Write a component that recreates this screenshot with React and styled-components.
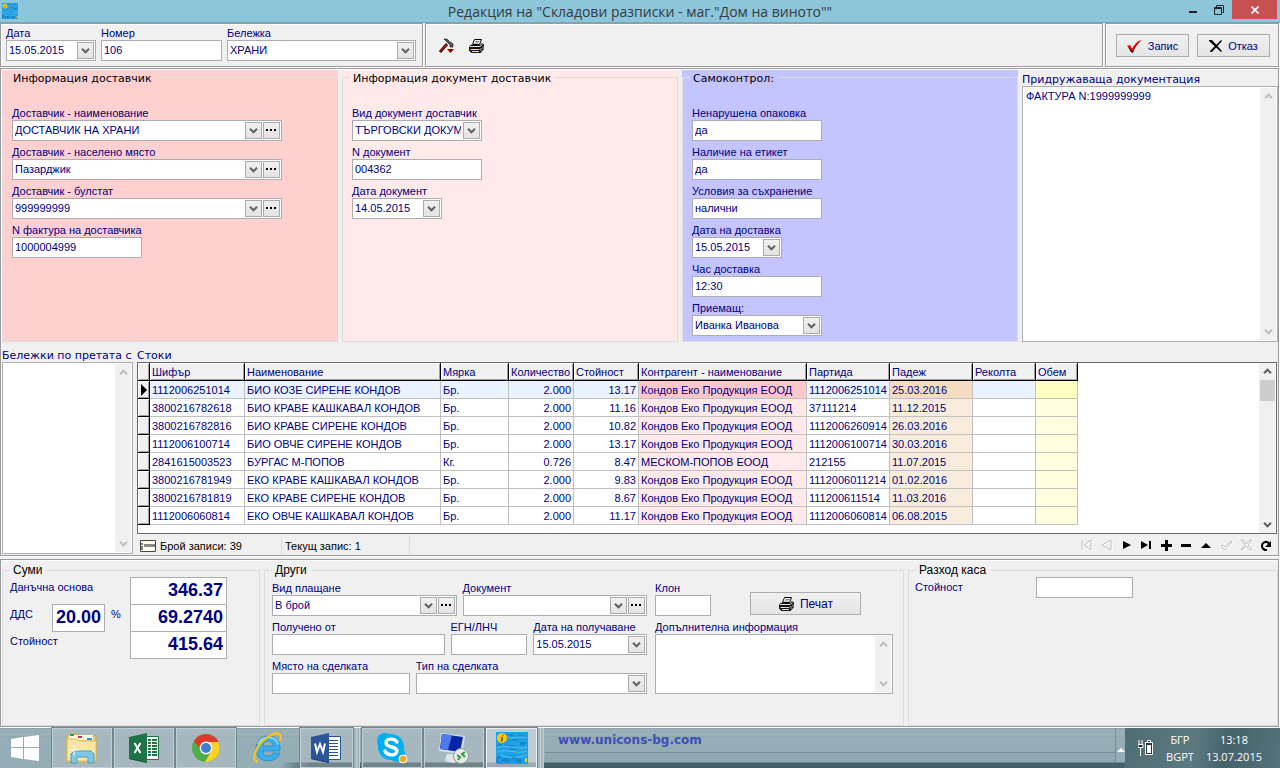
import React, { useId } from "react";
import styled, { createGlobalStyle, css } from "styled-components";

const GlobalStyle = createGlobalStyle`
  *, *::before, *::after { box-sizing: border-box; }
  body { margin: 0; background: #f0f0f0; color: #000080; }
  body, button, input, select, textarea {
    font-family: "Liberation Sans", Arial, sans-serif;
    font-size: 11px;
    line-height: 14px;
  }
`;

const Window = styled.div`
  display: flex;
  flex-direction: column;
  min-height: 100vh;
`;

/* ---------- title bar ---------- */

const TitleBar = styled.header`
  display: grid;
  grid-template-columns: 1fr auto 1fr;
  height: 23px;
  background: #8dc6da;
  border-bottom: 1px solid #7aa5b4;
`;
const TitleIcon = styled.div`
  padding: 3px 2px;
  svg { display: block; }
`;
const Title = styled.h1`
  margin: 0;
  font: 400 14px/24px "Open Sans", "Noto Sans", sans-serif;
  color: #333b3f;
  white-space: nowrap;
`;
const Caption = styled.div`
  display: flex;
  justify-content: flex-end;
`;
const CaptionButton = styled.button`
  display: grid;
  place-items: center;
  width: ${(p) => (p.$close ? 45 : 26)}px;
  height: 19px;
  margin-right: ${(p) => (p.$close ? 3 : 0)}px;
  padding: 0;
  border: 0;
  background: ${(p) => (p.$close ? "#c75050" : "transparent")};
`;

/* ---------- frames ---------- */

const Frame = styled.section`
  border: 1px solid #9a9a9e;
  box-shadow: inset 1px 1px #fff, 1px 1px #fff;
  background: #f0f0f0;
`;
const ToolRow = styled.div`
  display: flex;
  gap: 2px;
  height: 44px;
  margin: 0 1px 1px 0;
`;
const HeaderFields = styled(Frame)`
  display: flex;
  flex: none;
  gap: 5px;
  width: 423px;
  padding: 2px 6px 0 5px;
`;
const Tools = styled(Frame)`
  display: flex;
  flex: 1;
  align-items: center;
  gap: 11px;
  padding: 2px 0 0 13px;
`;
const ToolButton = styled.button`
  width: 18px;
  height: 18px;
  padding: 0;
  border: 0;
  background: none;
  svg { display: block; }
`;
const Actions = styled(Frame)`
  display: flex;
  flex: none;
  gap: 8px;
  padding: 10px 8px 0 10px;
`;
const ActionButton = styled.button`
  display: flex;
  align-items: center;
  justify-content: center;
  gap: 5px;
  width: ${(p) => p.$width}px;
  height: 23px;
  padding: 0;
  border: 1px solid #acacac;
  background: linear-gradient(#f0f0f0, #e5e5e5);
  color: #000080;
  font-size: ${(p) => (p.$large ? 12 : 11)}px;
`;

/* ---------- fields ---------- */

const FieldBox = styled.div`
  display: flex;
  flex-direction: column;
  min-width: 0;
  max-width: 100%;
  ${(p) => (p.$grow ? css`flex: ${p.$grow} 1 0;` : css`width: ${p.$width}px;`)}
`;
const FieldLabel = styled.label`
  height: 14px;
  white-space: nowrap;
`;
const Box = styled.div`
  display: flex;
  gap: 1px;
  height: 21px;
  padding: 1px;
  border: 1px solid #abadb3;
  background: #fff;
`;
const plainControl = css`
  flex: 1;
  min-width: 0;
  width: 100%;
  padding: 0 1px 2px;
  border: 0;
  outline: 0;
  border-radius: 0;
  background: transparent;
  color: #000080;
`;
const TextInput = styled.input`${plainControl}`;
const Select = styled.select`
  ${plainControl}
  appearance: none;
`;
const mini = css`
  display: grid;
  place-items: center;
  flex: none;
  width: 17px;
  height: 17px;
  padding: 0;
  border: 1px solid #acacac;
  background: linear-gradient(#f0f0f0, #e3e3e3);
`;
const MiniButton = styled.button`${mini}`;
const MiniGlyph = styled.span`
  ${mini}
  pointer-events: none;
`;

const Chevron = ({ up, color = "#606060" }) => (
  <svg width="9" height="7" viewBox="0 0 9 7" aria-hidden="true">
    <path d={up ? "M1 5.2 4.5 1.7 8 5.2" : "M1 1.8 4.5 5.3 8 1.8"} fill="none" stroke={color} strokeWidth="2" />
  </svg>
);
const Dots = () => (
  <svg width="11" height="3" viewBox="0 0 11 3" shapeRendering="crispEdges" aria-hidden="true">
    <path d="M0 0h2v2H0zM4 0h2v2H4zM8 0h2v2H8z" fill="#000" />
  </svg>
);

function Field({ label, value = "", kind = "text", more, width, grow }) {
  const id = useId();
  return (
    <FieldBox $width={width} $grow={grow}>
      <FieldLabel htmlFor={id}>{label}</FieldLabel>
      <Box>
        {kind === "select" ? (
          <Select id={id} defaultValue={value}>
            <option value={value}>{value}</option>
          </Select>
        ) : (
          <TextInput id={id} defaultValue={value} />
        )}
        {kind === "select" && <MiniGlyph><Chevron /></MiniGlyph>}
        {kind === "date" && <MiniButton type="button" aria-label={label}><Chevron /></MiniButton>}
        {more && <MiniButton type="button" aria-label={label}><Dots /></MiniButton>}
      </Box>
    </FieldBox>
  );
}

const wideCaption = css`
  font-family: "DejaVu Sans", Verdana, sans-serif;
  font-size: 11px;
`;
const MemoField = styled.div`
  display: flex;
  flex-direction: column;
  min-width: 0;
`;
const MemoLabel = styled.label`
  flex: none;
  height: 14px;
  white-space: nowrap;
  ${(p) => p.$wide && css`
    ${wideCaption}
    line-height: 16px;
  `}
`;
const MemoBox = styled.div`
  display: flex;
  flex: 1;
  padding: 1px;
  min-height: ${(p) => p.$min || 0}px;
  border: 1px solid #abadb3;
  background: #fff;
`;
const MemoText = styled.textarea`
  flex: 1;
  min-width: 0;
  padding: 1px 2px;
  border: 0;
  outline: 0;
  resize: none;
  overflow: hidden;
  background: transparent;
  color: #000080;
`;
const Scroll = styled.div`
  display: flex;
  flex-direction: column;
  align-items: center;
  flex: none;
  width: 16px;
  padding: 5px 0;
  background: #f0f0f0;
`;
const Thumb = styled.div`
  width: 15px;
  height: 21px;
  margin: 5px 0 auto;
  background: #cdcdcd;
`;
const Spacer = styled.div`flex: 1;`;

function Memo({ label, value = "", wide, min }) {
  const id = useId();
  return (
    <MemoField>
      <MemoLabel htmlFor={id} $wide={wide}>{label}</MemoLabel>
      <MemoBox $min={min}>
        <MemoText id={id} defaultValue={value} />
        <Scroll aria-hidden="true">
          <Chevron up color="#bfbfbf" />
          <Spacer />
          <Chevron color="#bfbfbf" />
        </Scroll>
      </MemoBox>
    </MemoField>
  );
}

/* ---------- supplier info ---------- */

const Main = styled(Frame)`
  display: flex;
  flex-direction: column;
  flex: 1;
  gap: 6px;
  margin: 0 1px 3px 0;
  padding: 1px 0 0 1px;
`;
const InfoGrid = styled.div`
  display: grid;
  grid-template-columns: repeat(3, minmax(0, 336fr)) minmax(0, 256fr);
  gap: 4px;
`;
const InfoCard = styled.div`
  display: flex;
  background: ${(p) => p.$color};
`;
const Group = styled.fieldset`
  flex: 1;
  min-width: 0;
  margin: 0;
  padding: 0;
  border: 1px solid #dcdcdc;
`;
const Legend = styled.legend`
  height: 14px;
  margin-left: 7px;
  padding: 0 4px 0 3px;
  color: #000;
  font-size: 12px;
  line-height: 14px;
  ${(p) => p.$wide && css`
    ${wideCaption}
    line-height: 18px;
  `}
`;
const InfoFields = styled.div`
  display: flex;
  flex-direction: column;
  gap: 4px;
  padding: 22px 9px 5px;
`;
const DocsColumn = styled.div`
  display: flex;
  flex-direction: column;
  padding-top: 2px;
  > * { flex: 1; }
`;

/* ---------- goods ---------- */

const GoodsRow = styled.div`
  display: grid;
  grid-template-columns: 131px minmax(0, 1fr);
  gap: 4px;
  flex: 1;
`;
const NotesColumn = styled.div`
  display: flex;
  flex-direction: column;
  padding-bottom: 1px;
  > * { flex: 1; }
`;
const GoodsColumn = styled.div`
  display: flex;
  flex-direction: column;
  min-width: 0;
`;
const GoodsTitle = styled.h2`
  height: 14px;
  margin: 0;
  font-weight: 400;
  line-height: 16px;
  ${wideCaption}
`;
const TableFrame = styled.div`
  display: flex;
  justify-content: space-between;
  flex: 1;
  min-height: 172px;
  padding-right: 1px;
  border: 1px solid #696969;
  margin-right: 1px;
  background: #fff;
`;
const TableScroll = styled.div`
  min-width: 0;
  overflow: hidden;
`;
const Table = styled.table`
  table-layout: fixed;
  width: 940px;
  border-collapse: separate;
  border-spacing: 0;
`;
const Th = styled.th`
  height: 18px;
  padding: 0 2px;
  border-right: 1px solid #000;
  border-bottom: 1px solid #000;
  box-shadow: inset 1px 1px #fff, inset -1px -1px #a0a0a0;
  background: #f0f0f0;
  font-weight: 400;
  text-align: left;
  white-space: nowrap;
  line-height: 14px;
`;
const Td = styled.td`
  height: 18px;
  padding: 0 2px;
  overflow: hidden;
  border-right: 1px solid #c0c0c0;
  border-bottom: 1px solid #c0c0c0;
  background: ${(p) => p.$bg || "#fff"};
  text-align: ${(p) => (p.$num ? "right" : "left")};
  white-space: nowrap;
  line-height: 14px;
`;
const RowHead = styled(Th)`
  padding: 0 0 0 1px;
  svg { display: block; margin: 0 auto; }
`;
const StatusBar = styled.div`
  display: flex;
  align-items: center;
  flex: none;
  height: 21px;
  padding: 2px 2px 0 0;
  color: #000;
`;
const StatusCell = styled.div`
  display: flex;
  align-items: center;
  gap: 4px;
  width: ${(p) => p.$width}px;
  height: 17px;
  padding-left: 3px;
  border-right: 1px solid #d9d9d9;
`;
const Nav = styled.div`
  display: flex;
  margin-left: auto;
`;
const NavButton = styled.button`
  display: grid;
  place-items: center;
  width: 20px;
  height: 18px;
  padding: 0;
  border: 0;
  background: none;
`;

const columns = [
  ["Шифър", 95], ["Наименование", 196], ["Мярка", 68], ["Количество", 65], ["Стойност", 65],
  ["Контрагент - наименование", 168], ["Партида", 83], ["Падеж", 83], ["Реколта", 63], ["Обем", 42],
];
const KONDOV = "Кондов Еко Продукция ЕООД";
const goods = [
  ["1112006251014", "БИО КОЗЕ СИРЕНЕ КОНДОВ", "Бр.", "2.000", "13.17", KONDOV, "1112006251014", "25.03.2016", "", ""],
  ["3800216782618", "БИО КРАВЕ КАШКАВАЛ КОНДОВ", "Бр.", "2.000", "11.16", KONDOV, "37111214", "11.12.2015", "", ""],
  ["3800216782816", "БИО КРАВЕ СИРЕНЕ КОНДОВ", "Бр.", "2.000", "10.82", KONDOV, "1112006260914", "26.03.2016", "", ""],
  ["1112006100714", "БИО ОВЧЕ СИРЕНЕ КОНДОВ", "Бр.", "2.000", "13.17", KONDOV, "1112006100714", "30.03.2016", "", ""],
  ["2841615003523", "БУРГАС М-ПОПОВ", "Кг.", "0.726", "8.47", "МЕСКОМ-ПОПОВ ЕООД", "212155", "11.07.2015", "", ""],
  ["3800216781949", "ЕКО КРАВЕ КАШКАВАЛ КОНДОВ", "Бр.", "2.000", "9.83", KONDOV, "1112006011214", "01.02.2016", "", ""],
  ["3800216781819", "ЕКО КРАВЕ СИРЕНЕ КОНДОВ", "Бр.", "2.000", "8.67", KONDOV, "111200611514", "11.03.2016", "", ""],
  ["1112006060814", "ЕКО ОВЧЕ КАШКАВАЛ КОНДОВ", "Бр.", "2.000", "11.17", KONDOV, "1112006060814", "06.08.2015", "", ""],
];
const tint = { 5: ["#ffc8c8", "#ffe9e9"], 7: ["#f5dcc0", "#f8ecdc"], 9: ["#ffffc0", "#ffffe0"] };
const cellColor = (col, active) => {
  if (tint[col]) return tint[col][active ? 0 : 1];
  return active ? "#eaf3ff" : "#fff";
};

const navItems = [
  ["Първи", "M2 1v10M11 1v10L4 6z", true],
  ["Предишен", "M11 1v10L2 6z", true],
  ["Следващ", "M3 2v8l8-4z"],
  ["Последен", "M1 2v8l7-4zM9 2h2v8H9z"],
  ["Добави", "M5 1h3v4h4v3H8v4H5V8H1V5h4z"],
  ["Изтрий", "M1 5h10v3H1z"],
  ["Редактирай", "M1 9h10L6 4z"],
  ["Потвърди", "M1 7l2-1 2 2 6-6 1 1-7 8z", true],
  ["Откажи", "M1 1h2l3 4 4-4h2L8 6l4 5h-2L6 7l-4 4H1l4-5z", true],
];

function NavIcon({ d, off }) {
  return (
    <svg width="13" height="13" viewBox="0 0 13 13" aria-hidden="true">
      {off ? (
        <>
          <path d={d} fill="none" stroke="#fff" transform="translate(1 1)" />
          <path d={d} fill="none" stroke="#b4b4b4" strokeWidth=".8" />
        </>
      ) : (
        <path d={d} fill="#000" />
      )}
    </svg>
  );
}

/* ---------- totals, payment ---------- */

const Lower = styled(Frame)`
  display: grid;
  grid-template-columns: minmax(0, 258fr) minmax(0, 640fr) minmax(0, 370fr);
  gap: 4px;
  height: 168px;
  flex: none;
  margin: 0 1px 1px 0;
  padding: 3px 0 0 1px;
`;
const Sums = styled.div`
  display: grid;
  grid-template-columns: 42px 53px 25px 97px;
  grid-auto-rows: 27px;
  padding: 0 7px;
`;
const SumLabel = styled.label`
  grid-column: span ${(p) => p.$span || 1};
  padding: ${(p) => (p.$unit ? "3px 0 0 6px" : "3px 0 0")};
`;
const SumInput = styled.input`
  width: 100%;
  height: 28px;
  padding: 0 3px 2px;
  border: 1px solid #abadb3;
  border-radius: 0;
  outline: 0;
  background: #fff;
  color: #000080;
  font-size: 18px;
  font-weight: 700;
  text-align: right;
`;
const PayGrid = styled.div`
  display: flex;
  gap: 8px;
  padding: 4px 10px 0 7px;
`;
const PayColumn = styled.div`
  display: flex;
  flex-direction: column;
  flex: ${(p) => p.$grow} 1 0;
  gap: 4px;
  min-width: 0;
`;
const PayRow = styled.div`
  display: flex;
  gap: 6px;
`;
const PrintWrap = styled.div`
  flex: 143 1 0;
  padding: 11px 0 0 33px;
`;
const Expense = styled.div`
  display: flex;
  padding: 0 6px;
`;
const ExpenseLabel = styled.label`
  width: 121px;
  padding-top: 3px;
`;
const ExpenseBox = styled(Box)`width: 97px;`;

/* ---------- taskbar ---------- */

const Taskbar = styled.footer`
  display: flex;
  flex: none;
  height: 40px;
  background:
    linear-gradient(90deg, #95adb5 280px, transparent 310px) bottom / 100% 6px no-repeat,
    linear-gradient(#8aa4ad 0 1px, #98afb8 1px 8px, #8fa8b0 8px 9px, #95adb5 9px 34px, #466068 35px 40px);
`;
const TaskButton = styled.button`
  display: grid;
  place-items: center;
  flex: none;
  width: ${(p) => p.$width || 60}px;
  height: 40px;
  margin-right: 2px;
  padding: 0;
  border: 1px solid ${(p) => (p.$plain ? "transparent" : p.$active ? "#e8eef0" : "#c3ced3")};
  background: ${(p) => (p.$plain ? "transparent" : p.$active ? "rgba(225, 232, 235, 0.55)" : "rgba(205, 210, 215, 0.3)")};
  box-shadow: ${(p) => (p.$plain ? "none" : "0 0 0 1px #71868f")};
  ${(p) => p.$stack && css`
    margin-right: ${p.$active ? 8 : 9}px;
    box-shadow: 0 0 0 1px #71868f, 3px 0 #a5b6bd, 4px 0 #c3ced3, 6px 0 #a5b6bd, 7px 0 #c3ced3;
  `}
`;
const Desk = styled.div`
  flex: 1;
  padding: 5px 13px;
  margin-bottom: 6px;
  border-right: 1px solid #748c95;
  box-shadow: inset 0 -9px #90a8b0, inset 0 -10px #748c95;
`;
const SiteLink = styled.a`
  color: #3c50b8;
  font: 700 12px/14px "DejaVu Sans", Verdana, sans-serif;
  text-decoration: none;
`;
const TrayArrow = styled.button`
  width: 9px;
  padding: 0;
  border: 0;
  background: none;
`;
const Tray = styled.div`
  display: flex;
  align-items: center;
  justify-content: space-between;
  width: 155px;
  padding: 0 18px 0 13px;
  background: linear-gradient(100deg, #4f6d75, #5d7980 45%, #45616a 65%, #56727a);
  color: #fff;
  font: 400 11px/17px "Open Sans", "Noto Sans", sans-serif;
  text-align: center;
  svg { flex: none; }
`;
const TrayText = styled.div`white-space: nowrap;`;

/* ---------- drawings ---------- */

const AppIcon = ({ size }) => (
  <svg width={size} height={size} viewBox="0 0 32 32" aria-hidden="true">
    <rect width="32" height="32" fill="#1ea0e4" />
    <g stroke="#1577bd" fill="none" strokeWidth="1">
      <path d="M12 3h6m3 1h9M15 8h7m2 3h6M2 13h4m3 1h9m6-2h5M1 25h5m8-8h9" />
    </g>
    <g stroke="#59c2f1" fill="none" strokeWidth="1">
      <path d="M12 5c6 3 12-2 19 1M1 16c9-5 20 3 30-1M1 20c10-4 21 3 30-1M4 23c8 4 17 3 27 0" />
    </g>
    <circle cx="6" cy="6" r="5" fill="#fcc80e" />
    <path d="M6.500 5 5.500 9.500M7 2.500v1" stroke="#69550e" strokeWidth="1.5" />
    <path d="M4 26H1v4h3M6 26v4l3-4v4M11 26v4m3-4-3 2 3 2M16 30v-4h4v4M22 26v4h3v-2h-3" stroke="#1577bd" fill="none" />
    <rect x="29" y="26" width="2" height="4" fill="#fcc80e" />
  </svg>
);
const Printer = () => (
  <svg width="17" height="16" viewBox="0 0 17 16" aria-hidden="true">
    <path d="M6.500 1.500h7l-2 5h-7z" fill="#fff" stroke="#000" />
    <path d="M7.500 3.500h4M6.500 5h4" stroke="#555" strokeWidth=".8" />
    <path d="M3 6.500 1 9v3.500L3.500 15h9l3.500-4V6.500L14 5l-2 2H4z" fill="#111" />
    <path d="M2 8.500h10l2.500-2M2.500 11.500h9M4 13.500h7" fill="none" stroke="#e4e4e4" />
    <path d="M13 10v3M15 8.500v2.500" stroke="#bbb" />
    <path d="M8 11.500h3" stroke="#f0e000" />
  </svg>
);
const Hammer = () => (
  <svg width="17" height="16" viewBox="0 0 17 16" aria-hidden="true">
    <path d="M1 14 8 6" stroke="#300" strokeWidth="2.800" />
    <path d="M1.500 13.500 8 6" stroke="#a01515" strokeWidth="1.600" />
    <path d="M5 1h3l3 3 2 1 1 1v3h-3V7L9 5 7 3z" fill="#4c585c" stroke="#111" strokeWidth=".6" />
    <path d="M8 11h7l-3.500 4z" fill="#900000" />
  </svg>
);
const Check = () => (
  <svg width="16" height="14" viewBox="0 0 16 14" aria-hidden="true">
    <path d="M1 8l3 5 2 1c1-5 4-9 9-13-4 2-7 5-9 9z" fill="#000" />
    <path d="M0 7l3-1 2 4c2-4 5-8 9-9-4 3-6 7-8 11H5z" fill="#f00" />
  </svg>
);
const Cross = () => (
  <svg width="14" height="14" viewBox="0 0 14 14" aria-hidden="true">
    <path d="M0 1h3l10 11-1 1L0 2zM12 1l1 1L3 13H1v-1z" fill="#000" />
  </svg>
);
const WinLogo = () => (
  <svg width="28" height="26" viewBox="0 0 28 26" aria-hidden="true">
    <path d="M0 4l12-2v10H0zM13 2l15-2v12H13zM0 13h12v11L0 22zM13 13h15v13l-15-2z" fill="#fff" />
  </svg>
);
const Explorer = () => (
  <svg width="34" height="32" viewBox="0 0 34 32" aria-hidden="true">
    <path d="M2 4l3-2h8l2 2h16v26H2z" fill="#e9cf74" stroke="#c9a848" />
    <path d="M4 3h24v5H4z" fill="#fff8dc" />
    <path d="M5 2h4v2H5z" fill="#27a040" />
    <path d="M13 4h4v2h-4z" fill="#d03a2b" />
    <path d="M22 6h5v2h-5z" fill="#3592de" />
    <path d="M2 7h10l2 2h17v20H2z" fill="#f8e6a2" stroke="#d8bc62" />
    <path d="M6 31v-9l3-3h17l3 3v9h-6v-6H12v6z" fill="#80c8e8" stroke="#4b9ac4" />
    <path d="M9 13v10M4 18h10" stroke="#fff" strokeWidth="1" />
  </svg>
);
const Office = ({ color, dark, mark, sheet }) => (
  <svg width="31" height="30" viewBox="0 0 31 30" aria-hidden="true">
    <path d="M17.500 3.500h12v23h-12z" fill="#fff" stroke={color} />
    {sheet ? (
      <g fill={color}>
        {[6, 9, 12, 15, 18, 21].map((y) => (
          <path key={y} d={`M19 ${y}h3v2h-3zM23 ${y}h5v2h-5z`} />
        ))}
      </g>
    ) : (
      <path d="M18 7.500h9M18 10.500h9M18 13.500h9M18 16.500h9M18 19.500h9M18 22.500h9" stroke={color} />
    )}
    <path d="M0 4 18 0v30L0 26z" fill={color} />
    <path d={mark} fill="none" stroke="#fff" strokeWidth="2" />
    <path d="M0 26l18 4v-1L0 25z" fill={dark} />
  </svg>
);
const Chrome = () => (
  <svg width="28" height="28" viewBox="0 0 28 28" aria-hidden="true">
    <circle cx="14" cy="14" r="14" fill="#4eae4a" />
    <path d="M1.900 7A14 14 0 0 1 26.500 8H14a6 6 0 0 0-5.600 8z" fill="#dc3a2d" />
    <path d="M26.500 8A14 14 0 0 1 13 28l6.200-11A6 6 0 0 0 14 8z" fill="#fbd227" />
    <circle cx="14" cy="14" r="6.400" fill="#fff" />
    <circle cx="14" cy="14" r="5" fill="#3e7fd0" />
  </svg>
);
const Explorer11 = () => (
  <svg width="32" height="32" viewBox="0 0 32 32" aria-hidden="true">
    <path
      d="M16 4C9 4 4 9 4 17s5 12 12 12c6 0 10-3 12-8h-7c-1 2-3 3-5 3-3 0-5-2-5-5h17C29 10 24 4 16 4zm-5 10c0-3 2-5 5-5s5 2 5 5z"
      fill="#37aeea"
      fillRule="evenodd"
      stroke="#1c7fbf"
      strokeWidth=".6"
    />
    <path d="M6 12c2-4 6-6.500 10-6.500 5 0 9 2.500 10 7" fill="none" stroke="#9ce0fb" strokeWidth="1.500" />
    <path d="M6 29.500C-2 30 4 12 16 5c9-6 15-4 12 4" fill="none" stroke="#f5c21c" strokeWidth="2.400" />
  </svg>
);
const Skype = () => (
  <svg width="32" height="32" viewBox="0 0 32 32" aria-hidden="true">
    <circle cx="9" cy="9" r="8" fill="#00aff0" />
    <circle cx="21" cy="22" r="8" fill="#00aff0" />
    <circle cx="15" cy="15" r="13" fill="#00aff0" />
    <path d="M21 10c-2-4-11-4-11 1 0 5 11 3 11 8 0 5-10 5-12 0" fill="none" stroke="#fff" strokeWidth="3.400" strokeLinecap="round" />
    <circle cx="27" cy="27" r="4" fill="#ffa91f" stroke="#fff" />
  </svg>
);
const Remote = () => (
  <svg width="32" height="32" viewBox="0 0 32 32" aria-hidden="true">
    <path d="M3 1l24 3-3 18L1 19z" fill="#d9e2e8" />
    <path d="M4 2l21 3-3 15L2 17z" fill="#0a24a8" />
    <path d="M4 2l10 1-4 15-8-1z" fill="#4c78f0" />
    <path d="M9 22h10l2 7c-5 3-12 2-14-1z" fill="#dfe4e6" />
    <circle cx="23" cy="24" r="7.500" fill="#e8ebe8" stroke="#8e9a94" />
    <path d="M19 23l3 2-2 3M27 20l-3 2 3 3" fill="none" stroke="#2c9a3b" strokeWidth="2" />
  </svg>
);

const EXCEL_MARK = "M5.500 10l6 10M11.500 10l-6 10";
const WORD_MARK = "M4 10.500l2 8.500 3-8 3 8 2-8.500";

export default function App() {
  return (
    <>
      <GlobalStyle />
      <Window>
        <TitleBar>
          <TitleIcon><AppIcon size={16} /></TitleIcon>
          <Title>Редакция на "Складови разписки - маг."Дом на виното""</Title>
          <Caption>
            <CaptionButton type="button" aria-label="Минимизиране">
              <svg width="8" height="10" viewBox="0 0 8 10"><path d="M0 6h8v2H0z" fill="#222" /></svg>
            </CaptionButton>
            <CaptionButton type="button" aria-label="Възстановяване">
              <svg width="10" height="10" viewBox="0 0 10 10">
                <path d="M2.500 2V.5h7v7H8M.5 2.500h7v7h-7zM0 3.500h8" fill="none" stroke="#222" />
              </svg>
            </CaptionButton>
            <CaptionButton type="button" aria-label="Затваряне" $close>
              <svg width="8" height="8" viewBox="0 0 8 8"><path d="M.5.5l7 7m0-7l-7 7" stroke="#fff" strokeWidth="1.600" /></svg>
            </CaptionButton>
          </Caption>
        </TitleBar>

        <ToolRow>
          <HeaderFields>
            <Field label="Дата" value="15.05.2015" kind="date" width={90} />
            <Field label="Номер" value="106" width={121} />
            <Field label="Бележка" value="ХРАНИ" kind="select" width={189} />
          </HeaderFields>
          <Tools>
            <ToolButton type="button" aria-label="Настройки"><Hammer /></ToolButton>
            <ToolButton type="button" aria-label="Печат"><Printer /></ToolButton>
          </Tools>
          <Actions>
            <ActionButton type="button" $width={73}><Check />Запис</ActionButton>
            <ActionButton type="button" $width={73}><Cross />Отказ</ActionButton>
          </Actions>
        </ToolRow>

        <Main>
          <InfoGrid>
            <InfoCard $color="#ffd0d0">
              <Group>
                <Legend $wide>Информация доставчик</Legend>
                <InfoFields>
                  <Field label="Доставчик - наименование" value="ДОСТАВЧИК НА ХРАНИ" kind="select" more width={270} />
                  <Field label="Доставчик - населено място" value="Пазарджик" kind="select" more width={270} />
                  <Field label="Доставчик - булстат" value="999999999" kind="select" more width={270} />
                  <Field label="N фактура на доставчика" value="1000004999" width={130} />
                </InfoFields>
              </Group>
            </InfoCard>
            <InfoCard $color="#ffe9e9">
              <Group>
                <Legend $wide>Информация документ доставчик</Legend>
                <InfoFields>
                  <Field label="Вид документ доставчик" value="ТЪРГОВСКИ ДОКУМЕНТ" kind="select" width={130} />
                  <Field label="N документ" value="004362" width={130} />
                  <Field label="Дата документ" value="14.05.2015" kind="date" width={90} />
                </InfoFields>
              </Group>
            </InfoCard>
            <InfoCard $color="#c4c4ff">
              <Group>
                <Legend $wide>Самоконтрол:</Legend>
                <InfoFields>
                  <Field label="Ненарушена опаковка" value="да" width={130} />
                  <Field label="Наличие на етикет" value="да" width={130} />
                  <Field label="Условия за съхранение" value="налични" width={130} />
                  <Field label="Дата на доставка" value="15.05.2015" kind="date" width={90} />
                  <Field label="Час доставка" value="12:30" width={130} />
                  <Field label="Приемащ:" value="Иванка Иванова" kind="select" width={130} />
                </InfoFields>
              </Group>
            </InfoCard>
            <DocsColumn>
              <Memo wide label="Придружаваща документация" value="ФАКТУРА N:1999999999" />
            </DocsColumn>
          </InfoGrid>

          <GoodsRow>
            <NotesColumn>
              <Memo wide label="Бележки по претата с" />
            </NotesColumn>
            <GoodsColumn>
              <GoodsTitle>Стоки</GoodsTitle>
              <TableFrame>
                <TableScroll>
                  <Table>
                    <colgroup>
                      <col style={{ width: 12 }} />
                      {columns.map(([name, w]) => <col key={name} style={{ width: w }} />)}
                    </colgroup>
                    <thead>
                      <tr>
                        <RowHead />
                        {columns.map(([name]) => <Th key={name} scope="col">{name}</Th>)}
                      </tr>
                    </thead>
                    <tbody>
                      {goods.map((row, r) => (
                        <tr key={r}>
                          <RowHead>
                            {r === 0 && (
                              <svg width="7" height="12" viewBox="0 0 7 12" aria-hidden="true">
                                <path d="M0 0l6 6-6 6z" fill="#000" />
                              </svg>
                            )}
                          </RowHead>
                          {row.map((cell, c) => (
                            <Td key={c} $bg={cellColor(c, r === 0)} $num={c === 3 || c === 4}>{cell}</Td>
                          ))}
                        </tr>
                      ))}
                    </tbody>
                  </Table>
                </TableScroll>
                <Scroll aria-hidden="true">
                  <Chevron up />
                  <Thumb />
                  <Chevron />
                </Scroll>
              </TableFrame>
              <StatusBar>
                <StatusCell $width={145}>
                  <svg width="16" height="12" viewBox="0 0 16 12" aria-hidden="true">
                    <path d="M.5.5h15v11H.5z" fill="#fffbe8" stroke="#444" />
                    <path d="M4 4h11v3H4z" fill="#888" />
                    <path d="M1 4h2M1 7h2M1 9h2" stroke="#000" />
                  </svg>
                  Брой записи: 39
                </StatusCell>
                <StatusCell $width={128}>Текущ запис: 1</StatusCell>
                <Nav>
                  {navItems.map(([name, d, off]) => (
                    <NavButton key={name} type="button" aria-label={name} disabled={off}>
                      <NavIcon d={d} off={off} />
                    </NavButton>
                  ))}
                  <NavButton type="button" aria-label="Обнови">
                    <svg width="12" height="12" viewBox="0 0 12 12" aria-hidden="true">
                      <path d="M9 3.500C6 0 1.500 3 2 6.500 2.500 9 4.500 10.500 7 10" fill="none" stroke="#000" strokeWidth="2" />
                      <path d="M11 1v6H5z" fill="#000" />
                    </svg>
                  </NavButton>
                </Nav>
              </StatusBar>
            </GoodsColumn>
          </GoodsRow>
        </Main>

        <Lower>
          <Group>
            <Legend>Суми</Legend>
            <Sums>
              <SumLabel htmlFor="base" $span={3}>Данъчна основа</SumLabel>
              <SumInput id="base" defaultValue="346.37" />
              <SumLabel htmlFor="vat">ДДС</SumLabel>
              <SumInput id="vat" defaultValue="20.00" />
              <SumLabel htmlFor="vatSum" $unit>%</SumLabel>
              <SumInput id="vatSum" defaultValue="69.2740" />
              <SumLabel htmlFor="total" $span={3}>Стойност</SumLabel>
              <SumInput id="total" defaultValue="415.64" />
            </Sums>
          </Group>
          <Group>
            <Legend>Други</Legend>
            <PayGrid>
              <PayColumn $grow={375}>
                <PayRow>
                  <Field label="Вид плащане" value="В брой" kind="select" more grow={184} />
                  <Field label="Документ" kind="select" more grow={184} />
                </PayRow>
                <PayRow>
                  <Field label="Получено от" grow={173} />
                  <Field label="ЕГН/ЛНЧ" grow={77} />
                  <Field label="Дата на получаване" value="15.05.2015" kind="date" grow={114} />
                </PayRow>
                <PayRow>
                  <Field label="Място на сделката" grow={138} />
                  <Field label="Тип на сделката" kind="select" grow={232} />
                </PayRow>
              </PayColumn>
              <PayColumn $grow={238}>
                <PayRow>
                  <Field label="Клон" grow={56} />
                  <PrintWrap>
                    <ActionButton type="button" $width={111} $large><Printer />Печат</ActionButton>
                  </PrintWrap>
                </PayRow>
                <Memo label="Допълнителна информация" min={60} />
              </PayColumn>
            </PayGrid>
          </Group>
          <Group>
            <Legend>Разход каса</Legend>
            <Expense>
              <ExpenseLabel htmlFor="expense">Стойност</ExpenseLabel>
              <ExpenseBox><TextInput id="expense" /></ExpenseBox>
            </Expense>
          </Group>
        </Lower>

        <Taskbar>
          <TaskButton type="button" aria-label="Старт" $plain $width={50}><WinLogo /></TaskButton>
          <TaskButton type="button" aria-label="File Explorer"><Explorer /></TaskButton>
          <TaskButton type="button" aria-label="Excel"><Office color="#1f7346" dark="#185c38" mark={EXCEL_MARK} sheet /></TaskButton>
          <TaskButton type="button" aria-label="Chrome"><Chrome /></TaskButton>
          <TaskButton type="button" aria-label="Internet Explorer" $plain><Explorer11 /></TaskButton>
          <TaskButton type="button" aria-label="Word" $stack $width={53}><Office color="#2a5699" dark="#1f4480" mark={WORD_MARK} /></TaskButton>
          <TaskButton type="button" aria-label="Skype"><Skype /></TaskButton>
          <TaskButton type="button" aria-label="Remote Desktop"><Remote /></TaskButton>
          <TaskButton type="button" aria-label="Складови разписки" $active $stack $width={51}><AppIcon size={32} /></TaskButton>
          <Desk><SiteLink href="#unicons">www.unicons-bg.com</SiteLink></Desk>
          <TrayArrow type="button" aria-label="Скрити икони">
            <svg width="8" height="5" viewBox="0 0 8 5"><path d="M0 5l4-4 4 4z" fill="#fff" /></svg>
          </TrayArrow>
          <Tray>
            <svg width="16" height="16" viewBox="0 0 16 16" aria-hidden="true">
              <path d="M7.500 2.500h7v12h-7zM9.500.5h3v2h-3z" fill="#273338" stroke="#fff" />
              <path d="M9 5h4v8H9z" fill="#fff" />
              <path d="M1 0v4M4 0v4M0 4.500h5v3H0zM2.500 7v9" fill="#273338" stroke="#fff" />
            </svg>
            <TrayText>БГР<br />BGPT</TrayText>
            <TrayText>13:18<br />13.07.2015</TrayText>
          </Tray>
        </Taskbar>
      </Window>
    </>
  );
}
